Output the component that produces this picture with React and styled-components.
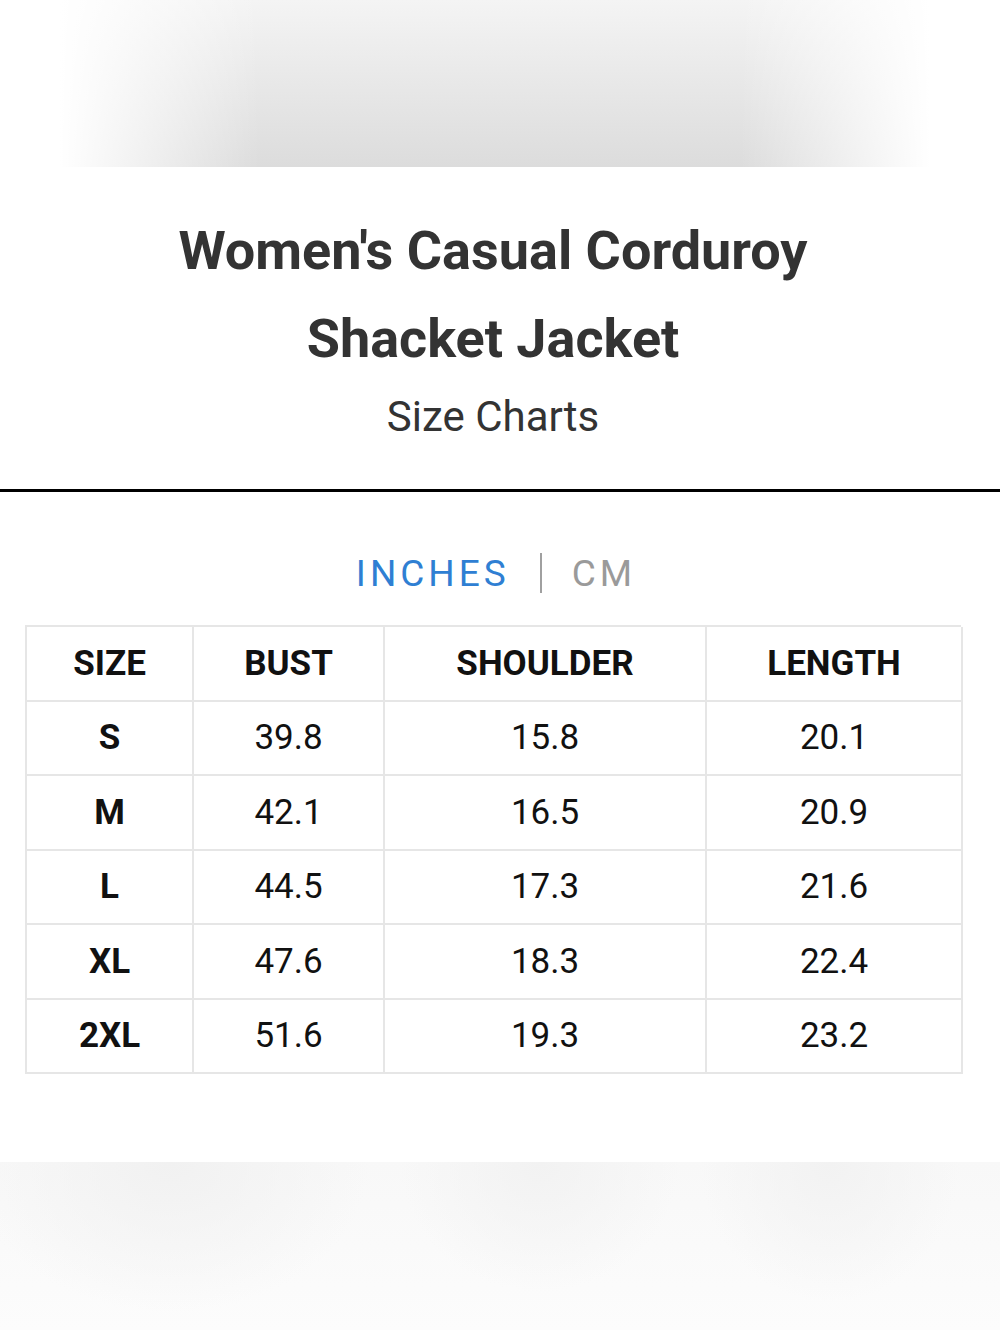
import React from "react";
import styled, { createGlobalStyle } from "styled-components";

const Global = createGlobalStyle`
  html, body { margin: 0; padding: 0; background: #fff; }
  body { font-family: Roboto, "Liberation Sans", sans-serif; }
`;

const Page = styled.div`
  width: 1000px;
  height: 1330px;
  display: flex;
  flex-direction: column;
  background: #fff;
  overflow: hidden;
`;

const TopShade = styled.div`
  height: 167px;
  flex: none;
  background:
    linear-gradient(90deg, #fff 0%, #fff 6%, rgba(255,255,255,0) 26%, rgba(255,255,255,0) 74%, #fff 93%, #fff 100%),
    linear-gradient(180deg, #f4f4f4 0%, #dcdcdc 100%);
`;

const Header = styled.header`
  display: flex;
  flex-direction: column;
  align-items: center;
  padding: 40px 14px 0 0;
  height: 322px;
  box-sizing: border-box;
  flex: none;
`;

const Title = styled.h1`
  margin: 0;
  font-family: Roboto, "Liberation Sans", sans-serif;
  font-weight: 700;
  font-size: 54px;
  line-height: 88px;
  color: #333;
  text-align: center;
  width: 700px;
`;

const Subtitle = styled.div`
  font-size: 42px;
  line-height: 50px;
  color: #333;
  margin-top: 9px;
`;

const Rule = styled.hr`
  margin: 0;
  border: none;
  height: 3px;
  background: #000;
  flex: none;
`;

const Units = styled.div`
  display: flex;
  justify-content: center;
  align-items: center;
  gap: 30px;
  margin-top: 58px;
  height: 46px;
  padding-right: 8px;
`;

const Unit = styled.span`
  font-size: 37px;
  letter-spacing: 4px;
  color: ${(p) => (p.$active ? "#2f7fd3" : "#9a9a9a")};
`;

const Divider = styled.span`
  width: 2px;
  height: 40px;
  background: #a0a0a0;
`;

const Table = styled.div`
  margin: 29px 0 0 25px;
  width: 936px;
  display: grid;
  grid-template-columns: 167px 191px 322px 256px;
  border-top: 2px solid #e6e6e6;
  border-left: 2px solid #e6e6e6;
  box-sizing: border-box;
`;

const Cell = styled.div`
  height: 74.5px;
  display: flex;
  align-items: center;
  justify-content: center;
  border-right: 2px solid #e6e6e6;
  border-bottom: 2px solid #e6e6e6;
  box-sizing: border-box;
  color: #111;
  font-size: 35px;
  font-weight: ${(p) => (p.$bold ? 700 : 400)};
`;

const BottomShade = styled.div`
  margin-top: auto;
  height: 168px;
  flex: none;
  background:
    radial-gradient(ellipse 200px 150px at 17% 0%, #f1f1f1 0%, rgba(250,250,250,0) 100%),
    radial-gradient(ellipse 140px 130px at 54% 0%, #f2f2f2 0%, rgba(250,250,250,0) 100%),
    radial-gradient(ellipse 130px 140px at 83% 0%, #f2f2f2 0%, rgba(250,250,250,0) 100%),
    linear-gradient(180deg, #f8f8f8 0%, #fcfcfc 100%);
`;

const headers = ["SIZE", "BUST", "SHOULDER", "LENGTH"];
const rows = [
  ["S", "39.8", "15.8", "20.1"],
  ["M", "42.1", "16.5", "20.9"],
  ["L", "44.5", "17.3", "21.6"],
  ["XL", "47.6", "18.3", "22.4"],
  ["2XL", "51.6", "19.3", "23.2"],
];

export default function App() {
  return (
    <Page>
      <Global />
      <TopShade />
      <Header>
        <Title>Women's Casual Corduroy Shacket Jacket</Title>
        <Subtitle>Size Charts</Subtitle>
      </Header>
      <Rule />
      <Units>
        <Unit $active>INCHES</Unit>
        <Divider />
        <Unit>CM</Unit>
      </Units>
      <Table>
        {headers.map((h) => (
          <Cell key={h} $bold>{h}</Cell>
        ))}
        {rows.map((r) =>
          r.map((v, i) => (
            <Cell key={r[0] + i} $bold={i === 0}>{v}</Cell>
          ))
        )}
      </Table>
      <BottomShade />
    </Page>
  );
}
